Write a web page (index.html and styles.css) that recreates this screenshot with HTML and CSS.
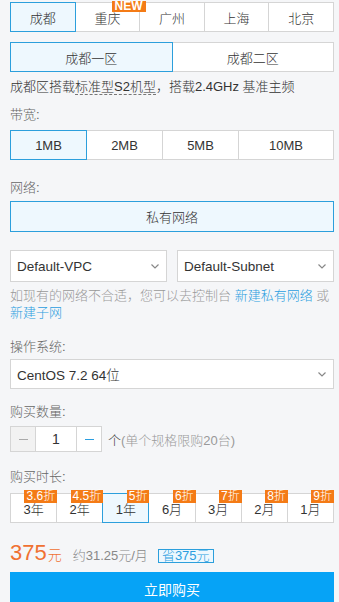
FILE: index.html
```html
<!DOCTYPE html>
<html lang="zh-CN">
<head>
  <meta charset="UTF-8" />
  <meta name="viewport" content="width=device-width, initial-scale=1.0"/>
  <title>购买云服务器</title>
  <link rel="stylesheet" href="styles.css">
</head>
<body>
  <div class="page">
    <div class="tabs region">
      <div class="tab active">成都</div>
      <div class="tab">重庆<span class="new-badge">NEW</span></div>
      <div class="tab">广州</div>
      <div class="tab">上海</div>
      <div class="tab">北京</div>
    </div>

    <div class="tabs zone">
      <div class="tab active">成都一区</div>
      <div class="tab">成都二区</div>
    </div>

    <p class="desc">成都区搭载<span class="dashed">标准型S2机型</span>，搭载2.4GHz 基准主频</p>

    <div class="label label-bw">带宽:</div>
    <div class="tabs bandwidth">
      <div class="tab active">1MB</div>
      <div class="tab">2MB</div>
      <div class="tab">5MB</div>
      <div class="tab wide">10MB</div>
    </div>

    <div class="label label-net">网络:</div>
    <div class="tabs network">
      <div class="tab active">私有网络</div>
    </div>

    <div class="select-row">
      <div class="select">
        <span>Default-VPC</span>
        <svg class="chevron" width="8" height="5" viewBox="0 0 8 5"><path d="M0.5 0.5 L4 4 L7.5 0.5" fill="none" stroke="#888" stroke-width="1.2"/></svg>
      </div>
      <div class="select">
        <span>Default-Subnet</span>
        <svg class="chevron" width="8" height="5" viewBox="0 0 8 5"><path d="M0.5 0.5 L4 4 L7.5 0.5" fill="none" stroke="#888" stroke-width="1.2"/></svg>
      </div>
    </div>
    <p class="hint">如现有的网络不合适，您可以去控制台 <a href="#">新建私有网络</a> 或 <a href="#">新建子网</a></p>

    <div class="label label-os">操作系统:</div>
    <div class="select os">
      <span>CentOS 7.2 64位</span>
      <svg class="chevron" width="8" height="5" viewBox="0 0 8 5"><path d="M0.5 0.5 L4 4 L7.5 0.5" fill="none" stroke="#888" stroke-width="1.2"/></svg>
    </div>

    <div class="label label-qty">购买数量:</div>
    <div class="stepper-row">
      <div class="stepper">
        <div class="step minus"><i></i></div>
        <div class="step-value">1</div>
        <div class="step plus"><i></i></div>
      </div>
      <span class="unit">个</span><span class="limit">(单个规格限购20台)</span>
    </div>

    <div class="label label-time">购买时长:</div>
    <div class="tabs duration">
      <div class="tab">3年<span class="badge">3.6折</span></div>
      <div class="tab">2年<span class="badge">4.5折</span></div>
      <div class="tab active">1年<span class="badge">5折</span></div>
      <div class="tab">6月<span class="badge">6折</span></div>
      <div class="tab">3月<span class="badge">7折</span></div>
      <div class="tab">2月<span class="badge">8折</span></div>
      <div class="tab">1月<span class="badge">9折</span></div>
    </div>

    <div class="price-row">
      <span class="price">375<small>元</small></span>
      <span class="monthly">约31.25元/月</span>
      <span class="save">省375元</span>
    </div>

    <button class="buy-button">立即购买</button>
  </div>
</body>
</html>
```

FILE: styles.css
```css
* { margin: 0; padding: 0; box-sizing: border-box; }
body {
  background: #f5f6f8;
  font-family: 'Liberation Sans', 'Noto Sans CJK SC', sans-serif;
  font-size: 13px;
  font-weight: 300;
  color: #333;
}
.page {
  padding: 2px 5px 0 10px;
  height: 602px;
  overflow: hidden;
}

/* Tab groups */
.tabs { display: flex; }
.tab {
  position: relative;
  flex: 1;
  height: 30px;
  display: flex;
  justify-content: center;
  align-items: center;
  background: #fff;
  border: 1px solid #d5d5d5;
  margin-left: -1px;
  color: #333;
}
.tab:first-child { margin-left: 0; }
.tab.active {
  background: #eef8fe;
  border-color: #2c9fdc;
  z-index: 1;
}
.zone { margin-top: 10px; }
.bandwidth .tab { flex: 0 0 77px; }
.bandwidth .tab.wide { flex: 1; }
.network .tab { height: 31px; }
.duration .tab { padding-top: 1px; }

.new-badge {
  position: absolute;
  top: -2px;
  left: 36px;
  background: #f47b16;
  color: #fff;
  font-weight: bold;
  font-size: 12px;
  line-height: 11px;
  padding: 0 3px;
  z-index: 2;
}
.badge {
  position: absolute;
  top: -4px;
  right: -1px;
  background: #f47b16;
  color: #fff;
  font-size: 12px;
  line-height: 13px;
  padding: 0 2px;
  z-index: 2;
}

.desc {
  margin-top: 6px;
  line-height: 18px;
  color: #333;
}
.dashed { border-bottom: 1px dashed #777; }

.label {
  line-height: 18px;
  color: #666;
}
.label-bw { margin-top: 10px; margin-bottom: 6px; }
.label-net { margin-top: 19px; margin-bottom: 4px; }
.label-os { margin-top: 17px; margin-bottom: 3px; }
.label-qty { margin-top: 14px; margin-bottom: 5px; }
.label-time { margin-top: 16px; margin-bottom: 7px; }

/* Selects */
.select-row {
  display: flex;
  gap: 10px;
  margin-top: 18px;
}
.select {
  flex: 1;
  height: 32px;
  display: flex;
  align-items: center;
  justify-content: space-between;
  background: #fff;
  border: 1px solid #d5d5d5;
  padding: 0 7px 0 6px;
  color: #333;
  font-size: 13.5px;
}
.select.os { height: 30px; }
.chevron { margin-top: 1px; }

.hint {
  margin-top: 5px;
  line-height: 17px;
  color: #999;
}
.hint a { color: #2b9ee0; text-decoration: none; }

/* Stepper */
.stepper-row {
  display: flex;
  align-items: center;
}
.stepper {
  display: flex;
  height: 26px;
  border: 1px solid #d5d5d5;
  background: #fff;
}
.step {
  width: 25px;
  display: flex;
  justify-content: center;
  align-items: center;
}
.step i {
  display: block;
  width: 9px;
  height: 1px;
}
.step.minus { background: #f2f2f2; border-right: 1px solid #d5d5d5; }
.step.minus i { background: #aaa; }
.step.plus { border-left: 1px solid #d5d5d5; }
.step.plus i { background: #2b9ee0; }
.step-value {
  width: 40px;
  text-align: center;
  line-height: 24px;
  font-size: 14px;
}
.unit { margin-left: 6px; color: #333; }
.limit { color: #999; }

/* Price */
.price-row {
  display: flex;
  align-items: baseline;
  margin-top: 17px;
  height: 22px;
}
.price {
  color: #f07132;
  font-size: 22px;
}
.price small { font-size: 14px; margin-left: 1px; }
.monthly {
  margin-left: 11px;
  color: #888;
}
.save {
  margin-left: 10px;
  border: 1px solid #2c9fdc;
  background: #eef8fe;
  color: #2b9ee0;
  line-height: 12px;
  padding: 0 3px;
}

.buy-button {
  display: block;
  width: 100%;
  height: 42px;
  margin-top: 10px;
  border: none;
  background: #06a3f6;
  color: #fff;
  font-family: inherit;
  font-size: 14px;
  padding-bottom: 8px;
  cursor: pointer;
}
```
